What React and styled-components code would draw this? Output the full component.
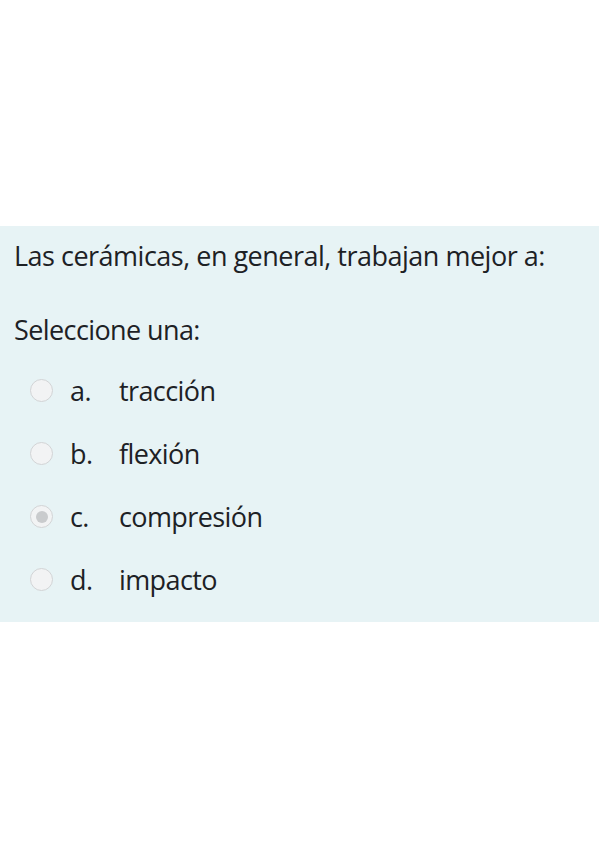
import React from "react";
import styled, { createGlobalStyle } from "styled-components";

const Global = createGlobalStyle`
  html, body { margin: 0; padding: 0; background: #ffffff; }
  body { font-family: "Open Sans", "Noto Sans", sans-serif; color: #1d2125; }
`;

const Page = styled.div`
  width: 599px;
  height: 848px;
  padding-top: 226px;
  box-sizing: border-box;
`;

const Panel = styled.div`
  background: #e7f3f5;
  height: 396px;
  box-sizing: border-box;
  padding: 10px 0 0 14px;
`;

const Question = styled.p`
  margin: 0;
  font-size: 27px;
  line-height: 40px;
  letter-spacing: -0.5px;
`;

const Prompt = styled.p`
  margin: 34px 0 0 0;
  font-size: 27px;
  line-height: 40px;
  letter-spacing: -0.6px;
`;

const Options = styled.div`
  display: flex;
  flex-direction: column;
  margin-top: 9px;
  padding-left: 16px;
`;

const Option = styled.label`
  display: flex;
  align-items: center;
  height: 63px;
  font-size: 27px;
  letter-spacing: -0.6px;
`;

const Radio = styled.span`
  width: 23px;
  height: 23px;
  border-radius: 50%;
  border: 1.5px solid #d2d4d6;
  background: #f2f3f4;
  box-sizing: border-box;
  display: flex;
  align-items: center;
  justify-content: center;
  flex: none;
  &::after {
    content: "";
    width: 12px;
    height: 12px;
    border-radius: 50%;
    background: ${(p) => (p.$checked ? "#c9cbcd" : "transparent")};
  }
`;

const Letter = styled.span`
  width: 49px;
  margin-left: 17px;
  flex: none;
`;

const Text = styled.span``;

const options = [
  { l: "a.", t: "tracción" },
  { l: "b.", t: "flexión" },
  { l: "c.", t: "compresión", checked: true },
  { l: "d.", t: "impacto" },
];

export default function App() {
  return (
    <Page>
      <Global />
      <Panel>
        <Question>Las cerámicas, en general, trabajan mejor a:</Question>
        <Prompt>Seleccione una:</Prompt>
        <Options>
          {options.map((o) => (
            <Option key={o.l}>
              <Radio $checked={o.checked} />
              <Letter>{o.l}</Letter>
              <Text>{o.t}</Text>
            </Option>
          ))}
        </Options>
      </Panel>
    </Page>
  );
}
